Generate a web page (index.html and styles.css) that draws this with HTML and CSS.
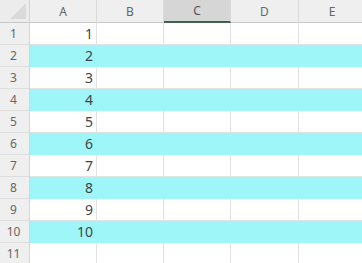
FILE: index.html
```html
<!DOCTYPE html>
<html>
<head>
  <meta charset="utf-8">
  <title>Sheet</title>
  <link rel="stylesheet" href="styles.css">
</head>
<body>
  <div class="sheet">
    <div class="corner"><span class="tri"></span></div>
    <div class="colhead">A</div>
    <div class="colhead">B</div>
    <div class="colhead sel">C</div>
    <div class="colhead">D</div>
    <div class="colhead">E</div>

    <div class="rowhead">1</div><div class="cell num">1</div><div class="cell"></div><div class="cell"></div><div class="cell"></div><div class="cell"></div>
    <div class="rowhead">2</div><div class="cell num fill">2</div><div class="cell fill"></div><div class="cell fill"></div><div class="cell fill"></div><div class="cell fill"></div>
    <div class="rowhead">3</div><div class="cell num">3</div><div class="cell"></div><div class="cell"></div><div class="cell"></div><div class="cell"></div>
    <div class="rowhead">4</div><div class="cell num fill">4</div><div class="cell fill"></div><div class="cell fill"></div><div class="cell fill"></div><div class="cell fill"></div>
    <div class="rowhead">5</div><div class="cell num">5</div><div class="cell"></div><div class="cell"></div><div class="cell"></div><div class="cell"></div>
    <div class="rowhead">6</div><div class="cell num fill">6</div><div class="cell fill"></div><div class="cell fill"></div><div class="cell fill"></div><div class="cell fill"></div>
    <div class="rowhead">7</div><div class="cell num">7</div><div class="cell"></div><div class="cell"></div><div class="cell"></div><div class="cell"></div>
    <div class="rowhead">8</div><div class="cell num fill">8</div><div class="cell fill"></div><div class="cell fill"></div><div class="cell fill"></div><div class="cell fill"></div>
    <div class="rowhead">9</div><div class="cell num">9</div><div class="cell"></div><div class="cell"></div><div class="cell"></div><div class="cell"></div>
    <div class="rowhead">10</div><div class="cell num fill">10</div><div class="cell fill"></div><div class="cell fill"></div><div class="cell fill"></div><div class="cell fill"></div>
    <div class="rowhead">11</div><div class="cell"></div><div class="cell"></div><div class="cell"></div><div class="cell"></div><div class="cell"></div>
  </div>
</body>
</html>
```

FILE: styles.css
```css
body {
  margin: 0;
  background: #fff;
  font-family: "Noto Sans", sans-serif;
  overflow: hidden;
}

.sheet {
  display: grid;
  grid-template-columns: 30px 67px 67px 67px 68px 67px;
  grid-template-rows: 23px repeat(11, 22px);
}

.corner {
  background: #ececec;
  border-right: 1px solid #d4d4d4;
  border-bottom: 1px solid #c8c8c8;
  position: relative;
}

.tri {
  position: absolute;
  right: 3px;
  bottom: 3px;
  width: 0;
  height: 0;
  border-left: 16px solid transparent;
  border-bottom: 16px solid #dadada;
}

.colhead {
  background: #efefef;
  border-right: 1px solid #dadada;
  border-bottom: 1px solid #c8c8c8;
  color: #666;
  font-size: 12px;
  display: flex;
  align-items: center;
  justify-content: center;
}

.colhead.sel {
  background: #d6d6d6;
  border-bottom: 2px solid #3f5f4f;
  color: #555;
}

.rowhead {
  background: #efefef;
  border-right: 1px solid #d4d4d4;
  border-bottom: 1px solid #dedede;
  color: #666;
  font-size: 12px;
  display: flex;
  align-items: center;
  justify-content: center;
  padding-right: 2px;
}

.cell {
  border-right: 1px solid #e2e2e2;
  border-bottom: 1px solid #e2e2e2;
  font-size: 14px;
  color: #444;
  display: flex;
  align-items: center;
  justify-content: flex-end;
  padding-right: 3px;
}

.cell.fill {
  background: #9ef6f8;
  border-color: #9ef6f8;
}
```
